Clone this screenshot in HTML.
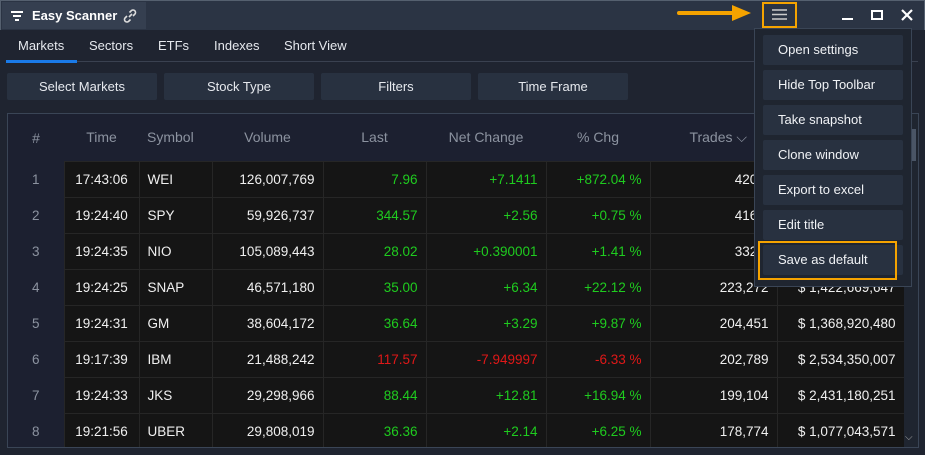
<!DOCTYPE html>
<html><head><style>
*{margin:0;padding:0;box-sizing:border-box}
body{width:925px;height:455px;background:#1f2430;font-family:"Liberation Sans",sans-serif;position:relative;overflow:hidden;color:#e8eaee}
.abs{position:absolute}
#title{left:0;top:0;width:925px;height:30px;background:#2b3444;border:1px solid #55606f;border-bottom:none}
#tt{left:2px;top:2px;width:144px;height:27px;background:#353f50;font-size:13px;font-weight:bold;color:#fff;line-height:27px}
.tab{top:38px;font-size:13px;color:#e6e9ee}
.btn{top:73px;height:27px;background:#283140;border-radius:2px;font-size:13px;text-align:center;line-height:27px;color:#e6e9ee}
#tbl{left:7px;top:113px;width:912px;height:335px;border:1px solid #3a4556;background:#1c2030;overflow:hidden}
table{border-collapse:collapse;position:absolute;left:0;top:0;table-layout:fixed;width:896px}
td{height:36px;font-size:13.5px;padding:0 8px;border:1px solid #262626;background:#151515;color:#f0f0f0;text-align:right;white-space:nowrap;overflow:hidden}
th{height:47px;font-weight:normal;font-size:14px;color:#8c93a0;background:#1c2030;white-space:nowrap}
td.n{background:#1c2030;color:#8c93a0;text-align:center;border:none}
.g{color:#1fcc1f}.r{color:#e01818}
td.l{text-align:left}
td.c{text-align:center}
#menu{left:754px;top:28px;width:158px;height:259px;background:#1f2530;border:1px solid #3a4556}
.mi{position:absolute;left:8px;width:140px;height:30px;background:#283140;border-radius:2px;font-size:13px;line-height:30px;padding-left:15px;color:#f0f2f5}
</style></head><body>
<div id="title" class="abs"></div>
<div id="tt" class="abs"><svg class="abs" style="left:9px;top:9px" width="12" height="10"><path d="M0 1h12M2 5h8M4 9h4" stroke="#fff" stroke-width="2"/></svg><span class="abs" style="left:30px">Easy Scanner</span>
<svg class="abs" style="left:120px;top:6px" width="16" height="16" fill="none" stroke="#ddd" stroke-width="1.6"><path d="M7 9l3-3M5 8l-2 2a2.5 2.5 0 0 0 3.5 3.5l2-2M11 8l2-2a2.5 2.5 0 0 0-3.5-3.5l-2 2"/></svg></div>
<svg class="abs" style="left:676px;top:4px" width="78" height="18"><path d="M3 9h58" stroke="#f5a300" stroke-width="4" stroke-linecap="round"/><path d="M56 1l19 8-19 8z" fill="#f5a300"/></svg>
<div class="abs" style="left:762px;top:2px;width:35px;height:26px;border:2px solid #f5a300"></div>
<svg class="abs" style="left:772px;top:9px" width="16" height="12"><path d="M0 1h15M0 5.5h15M0 10h15" stroke="#ccc" stroke-width="1.6"/></svg>
<div class="abs" style="left:842px;top:18px;width:11px;height:2px;background:#fff"></div>
<div class="abs" style="left:871px;top:10px;width:12px;height:10px;border:2px solid #fff"></div>
<svg class="abs" style="left:901px;top:9px" width="12" height="12"><path d="M1 1l10 10M11 1L1 11" stroke="#fff" stroke-width="2.2"/></svg>
<div class="tab abs" style="left:18px">Markets</div>
<div class="tab abs" style="left:89px">Sectors</div>
<div class="tab abs" style="left:158px">ETFs</div>
<div class="tab abs" style="left:214px">Indexes</div>
<div class="tab abs" style="left:284px">Short View</div>
<div class="abs" style="left:6px;top:61px;width:912px;height:1px;background:#3a4150"></div>
<div class="abs" style="left:6px;top:60px;width:71px;height:3px;background:#1a7ae8"></div>
<div class="btn abs" style="left:7px;width:150px">Select Markets</div>
<div class="btn abs" style="left:164px;width:150px">Stock Type</div>
<div class="btn abs" style="left:321px;width:150px">Filters</div>
<div class="btn abs" style="left:478px;width:150px">Time Frame</div>
<div id="tbl" class="abs">
<table>
<colgroup><col style="width:56px"><col style="width:75px"><col style="width:73px"><col style="width:111px"><col style="width:103px"><col style="width:120px"><col style="width:104px"><col style="width:127px"><col style="width:127px"></colgroup>
<tr><th>#</th><th>Time</th><th style="text-align:left;padding-left:8px">Symbol</th><th>Volume</th><th>Last</th><th>Net Change</th><th>% Chg</th><th style="text-align:right;padding-right:30px">Trades ⌵</th><th></th></tr>
<tr><td class="n">1</td><td class="c">17:43:06</td><td class="l">WEI</td><td>126,007,769</td><td class="g">7.96</td><td class="g">+7.1411</td><td class="g">+872.04 %</td><td>420,8</td><td></td></tr>
<tr><td class="n">2</td><td class="c">19:24:40</td><td class="l">SPY</td><td>59,926,737</td><td class="g">344.57</td><td class="g">+2.56</td><td class="g">+0.75 %</td><td>416,9</td><td></td></tr>
<tr><td class="n">3</td><td class="c">19:24:35</td><td class="l">NIO</td><td>105,089,443</td><td class="g">28.02</td><td class="g">+0.390001</td><td class="g">+1.41 %</td><td>332,5</td><td></td></tr>
<tr><td class="n">4</td><td class="c">19:24:25</td><td class="l">SNAP</td><td>46,571,180</td><td class="g">35.00</td><td class="g">+6.34</td><td class="g">+22.12 %</td><td>223,272</td><td>$ 1,422,669,647</td></tr>
<tr><td class="n">5</td><td class="c">19:24:31</td><td class="l">GM</td><td>38,604,172</td><td class="g">36.64</td><td class="g">+3.29</td><td class="g">+9.87 %</td><td>204,451</td><td>$ 1,368,920,480</td></tr>
<tr><td class="n">6</td><td class="c">19:17:39</td><td class="l">IBM</td><td>21,488,242</td><td class="r">117.57</td><td class="r">-7.949997</td><td class="r">-6.33 %</td><td>202,789</td><td>$ 2,534,350,007</td></tr>
<tr><td class="n">7</td><td class="c">19:24:33</td><td class="l">JKS</td><td>29,298,966</td><td class="g">88.44</td><td class="g">+12.81</td><td class="g">+16.94 %</td><td>199,104</td><td>$ 2,431,180,251</td></tr>
<tr><td class="n">8</td><td class="c">19:21:56</td><td class="l">UBER</td><td>29,808,019</td><td class="g">36.36</td><td class="g">+2.14</td><td class="g">+6.25 %</td><td>178,774</td><td>$ 1,077,043,571</td></tr>
</table>
<div class="abs" style="left:896px;top:0;width:14px;height:335px;background:#1f2530"></div>
<div class="abs" style="left:904px;top:15px;width:4px;height:32px;background:#4a5566"></div>
<div class="abs" style="left:897px;top:318px;font-size:10px;color:#aaa">⌵</div>
</div>
<div id="menu" class="abs">
<div class="mi" style="top:6px">Open settings</div>
<div class="mi" style="top:41px">Hide Top Toolbar</div>
<div class="mi" style="top:76px">Take snapshot</div>
<div class="mi" style="top:111px">Clone window</div>
<div class="mi" style="top:146px">Export to excel</div>
<div class="mi" style="top:181px">Edit title</div>
<div class="mi" style="top:216px">Save as default</div>
</div>
<div class="abs" style="left:758px;top:241px;width:139px;height:39px;border:2px solid #f5a300"></div>
</body></html>
